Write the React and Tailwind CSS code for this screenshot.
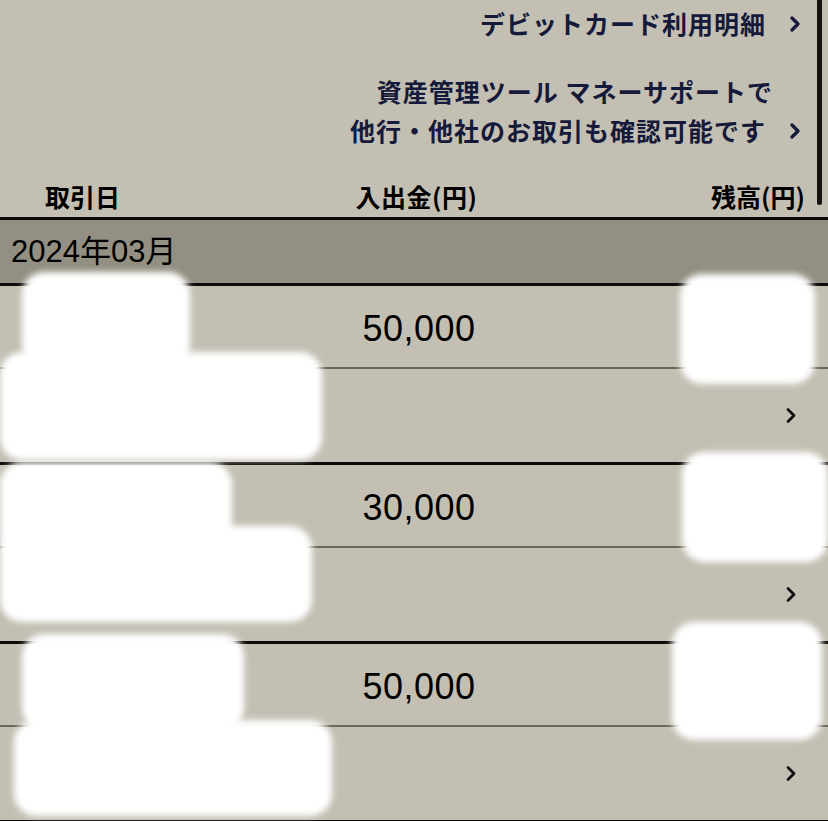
const font = { fontFamily: '"Noto Sans CJK JP", "Noto Sans", sans-serif' };
const latin = { fontFamily: '"Liberation Sans", "Noto Sans CJK JP", sans-serif' };

const Chevron = ({ className = '', stroke = 3 }) => (
  <svg viewBox="0 0 10 16" className={className} fill="none" stroke="currentColor" strokeWidth={stroke} strokeLinecap="round" strokeLinejoin="round">
    <path d="M2 2l6 6-6 6" />
  </svg>
);

const transactions = [{ amount: '50,000' }, { amount: '30,000' }, { amount: '50,000' }];

// redacted areas in the screenshot
const blobs = [
  'left-[22px] top-[272px] w-[168px] h-[96px]',
  'left-0 top-[352px] w-[322px] h-[108px]',
  'left-[680px] top-[274px] w-[135px] h-[110px]',
  'left-0 top-[462px] w-[232px] h-[90px]',
  'left-0 top-[526px] w-[312px] h-[96px]',
  'left-[682px] top-[452px] w-[146px] h-[110px]',
  'left-[22px] top-[634px] w-[222px] h-[96px]',
  'left-[14px] top-[720px] w-[318px] h-[96px]',
  'left-[672px] top-[622px] w-[150px] h-[118px]',
];

const TxRow = ({ amount }) => (
  <div className="flex flex-col">
    <div className="h-[3px] bg-[#0e0c0a]" />
    <div className="h-[81px] flex items-center justify-center pt-[4px]">
      <span className="text-[36px] text-black pl-[10px] tracking-[0.5px]" style={latin}>{amount}</span>
    </div>
    <div className="h-[2px] bg-[#6b6656]" />
    <div className="h-[93px] flex items-center justify-end pr-[32px]">
      <Chevron className="w-[10px] h-[17px] text-[#111]" stroke={2.8} />
    </div>
  </div>
);

export default function App() {
  return (
    <div className="relative w-[828px] h-[821px] overflow-hidden bg-[#c3bfb3]" style={font}>
      <div className="absolute right-[6px] top-0 w-[5px] h-[205px] rounded-b-full bg-[#161410]" />

      <div className="flex flex-col items-end pr-[28px] text-[#15193a]">
        <div className="flex items-center h-[48px] gap-[24px]">
          <span className="text-[25px] font-semibold tracking-[1px]">デビットカード利用明細</span>
          <Chevron className="w-[10px] h-[16px]" stroke={3.2} />
        </div>
        <div className="flex items-end gap-[24px] mt-[24px]">
          <div className="text-[25px] font-semibold text-right leading-[39px] tracking-[1px]">
            <div className="mr-[-7px]">資産管理ツール マネーサポートで</div>
            <div>他行・他社のお取引も確認可能です</div>
          </div>
          <Chevron className="w-[10px] h-[16px] mb-[11px]" stroke={3.2} />
        </div>
      </div>

      <div className="flex items-center justify-between h-[47px] mt-[20px] pt-[6px] pl-[45px] pr-[23px] text-black text-[25px] font-bold">
        <span>取引日</span>
        <span className="pl-[2px] tracking-[0.5px]">入出金(円)</span>
        <span>残高(円)</span>
      </div>
      <div className="h-[3px] bg-[#0e0c0a]" />
      <div className="h-[63px] flex items-center pl-[11px] pt-[2px] bg-[#939083] text-[31px] text-black" style={latin}>2024年03月</div>

      {transactions.map((t, i) => (
        <TxRow key={i} amount={t.amount} />
      ))}
      <div className="h-[3px] bg-[#0e0c0a]" />

      {blobs.map((b, i) => (
        <div key={i} className={`absolute ${b} rounded-[22px] bg-white blur-[3px]`} />
      ))}
    </div>
  );
}
